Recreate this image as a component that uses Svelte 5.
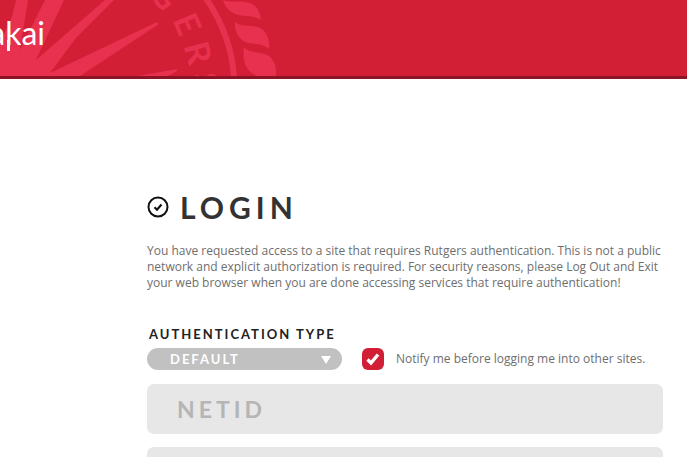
<script>
  let authType = $state('default');
  let notify = $state(true);
  let netid = $state('');
  let password = $state('');
</script>

<div class="page">
  <header>
    <svg class="seal" viewBox="0 0 280 76" width="280" height="76" aria-hidden="true">
      <g fill="#e8304f">
        <path d="M0 76V42L11 20 16 0H28L20 50 45 0H64L36 60 105 0H114L76 38 50 73 157 22 159 24 80 76Z" />
        <path d="M138 76 177 69V71L168 76Z" />
        <path d="M223 0C233 4 247-2 256 7Q260 12 261 20C251 13 240 19 230 11Q225 7 223 0Z" />
        <path d="M235 22C243 29 257 22 265 32Q270 39 269 49C260 41 248 47 240 38Q234 31 235 22Z" />
        <path d="M244 47C250 55 266 50 272 59Q277 66 276 76H257Q241 70 244 47Z" />
      </g>
      <path d="M205-3Q231 34 234 77" fill="none" stroke="#e8304f" stroke-width="6" />
      <g class="seal-text">
        <text transform="translate(165 -4) rotate(55)" text-anchor="middle" y="12">G</text>
        <text transform="translate(187 24) rotate(67)" text-anchor="middle" y="12">E</text>
        <text transform="translate(198 53) rotate(75)" text-anchor="middle" y="12">R</text>
        <text transform="translate(206 82) rotate(84)" text-anchor="middle" y="12">S</text>
      </g>
    </svg>
    <a class="logo" href="/">sakai</a>
  </header>

  <main>
    <h1>
      <svg viewBox="0 0 22 22" width="22" height="22" fill="none" aria-hidden="true">
        <circle cx="11" cy="11" r="9.5" stroke="#111" stroke-width="2" />
        <path d="M7.5 11.2 10 13.7 14.5 8.5" stroke="#111" stroke-width="2.2" />
      </svg>
      <span>LOGIN</span>
    </h1>
    <p>
      You have requested access to a site that requires Rutgers authentication. This is not a public
      network and explicit authorization is required. For security reasons, please Log Out and Exit
      your web browser when you are done accessing services that require authentication!
    </p>

    <form>
      <label class="type-label" for="auth-type">AUTHENTICATION TYPE</label>
      <div class="options">
        <div class="select">
          <select id="auth-type" bind:value={authType}>
            <option value="default">DEFAULT</option>
          </select>
          <svg viewBox="0 0 10 8" width="10" height="8" aria-hidden="true"><path d="M0 0H10L5 8Z" fill="#fff" /></svg>
        </div>
        <label class="notify">
          <span class="box">
            <input type="checkbox" bind:checked={notify} />
            {#if notify}
              <svg viewBox="0 0 22 22" width="22" height="22" fill="none" aria-hidden="true">
                <path d="M5.5 11.5 9 15 16 6.5" stroke="#fff" stroke-width="3.4" />
              </svg>
            {/if}
          </span>
          <span>Notify me before logging me into other sites.</span>
        </label>
      </div>
      <input class="field" type="text" placeholder="NETID" aria-label="NetID" bind:value={netid} />
      <input class="field" type="password" aria-label="Password" bind:value={password} />
    </form>
  </main>
</div>

<style>
  :global(body) {
    margin: 0;
    background: #fff;
  }
  .page {
    height: 100vh;
    overflow: hidden;
    font-family: 'Open Sans', 'Liberation Sans', sans-serif;
    color: #6e6e6e;
  }
  header {
    position: relative;
    height: 76px;
    background: #d21f36;
    border-bottom: 3px solid #8c1425;
    overflow: hidden;
  }
  .seal {
    position: absolute;
    left: 0;
    top: 0;
  }
  .seal-text {
    font: 700 34px Lato, sans-serif;
    fill: #e8304f;
  }
  .logo {
    position: relative;
    display: flex;
    justify-content: flex-end;
    width: 45px;
    padding-top: 13px;
    font: 400 32px/40px Lato, sans-serif;
    color: #fff;
    text-decoration: none;
  }
  /* long stem of the k */
  .logo::after {
    content: '';
    position: absolute;
    left: 7px;
    top: 40px;
    width: 3px;
    height: 11px;
    background: #fff;
  }
  main {
    padding: 110px 24px 0 147px;
  }
  h1 {
    display: flex;
    align-items: center;
    gap: 11px;
    margin: 0;
    font: 700 30px/36px Lato, sans-serif;
    letter-spacing: 5px;
    color: #333;
  }
  p {
    margin: 18px 0 0;
    font-size: 12px;
    line-height: 16px;
  }
  form {
    display: flex;
    flex-direction: column;
    margin-top: 35px;
  }
  .type-label {
    padding-left: 2px;
    font: 700 13px/16px Lato, sans-serif;
    letter-spacing: 2px;
    color: #222;
  }
  .options {
    display: flex;
    align-items: center;
    gap: 20px;
    margin: 6px 0 14px;
  }
  .select {
    position: relative;
    width: 195px;
  }
  .select svg {
    position: absolute;
    right: 11px;
    top: 8px;
    pointer-events: none;
  }
  select {
    display: block;
    width: 100%;
    height: 22px;
    padding: 0 24px 0 23px;
    border: 0;
    border-radius: 11px;
    appearance: none;
    background: #c1c1c1;
    color: #fff;
    font: 700 13px/22px Lato, sans-serif;
    letter-spacing: 2px;
  }
  .notify {
    display: flex;
    align-items: center;
    gap: 12px;
    font-size: 12px;
    line-height: 16px;
  }
  .box {
    position: relative;
    width: 22px;
    height: 22px;
  }
  .box input {
    display: block;
    width: 22px;
    height: 22px;
    margin: 0;
    appearance: none;
    border-radius: 6px;
    background: #d21f36;
  }
  .box svg {
    position: absolute;
    inset: 0;
    pointer-events: none;
  }
  .field {
    box-sizing: border-box;
    width: 100%;
    height: 50px;
    margin-bottom: 13px;
    padding: 0 30px;
    border: 0;
    border-radius: 7px;
    background: #e7e7e7;
    color: #666;
    font: 700 23px/30px Lato, sans-serif;
    letter-spacing: 4px;
  }
  .field::placeholder {
    color: #b5b5b5;
    opacity: 1;
  }
</style>
